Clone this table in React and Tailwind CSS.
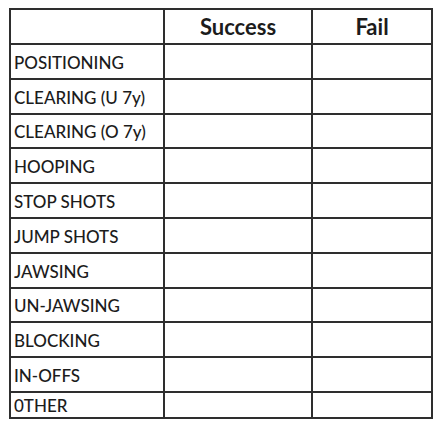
import React from 'react';

const rows = [
    'POSITIONING',
    'CLEARING (U 7y)',
    'CLEARING (O 7y)',
    'HOOPING',
    'STOP SHOTS',
    'JUMP SHOTS',
    'JAWSING',
    'UN-JAWSING',
    'BLOCKING',
    'IN-OFFS',
];

export default function App() {
    return (
        <div className="w-[440px] h-[429px] bg-white pt-[8px] pl-[9px] font-['Lato','Open_Sans',sans-serif] text-[#1c1c1c]">
            <table className="border-collapse border-2 border-[#2e2e2e] table-fixed w-[422px]">
                <colgroup>
                    <col className="w-[154px]" />
                    <col className="w-[148px]" />
                    <col className="w-[120px]" />
                </colgroup>
                <thead>
                    <tr className="h-[35px]">
                        <th className="border-2 border-[#2e2e2e]"></th>
                        <th className="border-2 border-[#2e2e2e] text-[22px] font-bold text-center leading-none">Success</th>
                        <th className="border-2 border-[#2e2e2e] text-[22px] font-bold text-center leading-none">Fail</th>
                    </tr>
                </thead>
                <tbody>
                    {rows.map((label) => (
                        <tr key={label} className="h-[34.8px]">
                            <td className="border-2 border-[#2e2e2e] pl-[3px] pt-[2px] text-[17px] font-medium leading-none whitespace-nowrap">{label}</td>
                            <td className="border-2 border-[#2e2e2e]"></td>
                            <td className="border-2 border-[#2e2e2e]"></td>
                        </tr>
                    ))}
                    <tr className="h-[26px]">
                        <td className="border-2 border-[#2e2e2e] pl-[3px] pt-[2px] text-[17px] font-medium leading-none">0THER</td>
                        <td className="border-2 border-[#2e2e2e]"></td>
                        <td className="border-2 border-[#2e2e2e]"></td>
                    </tr>
                </tbody>
            </table>
        </div>
    );
}
